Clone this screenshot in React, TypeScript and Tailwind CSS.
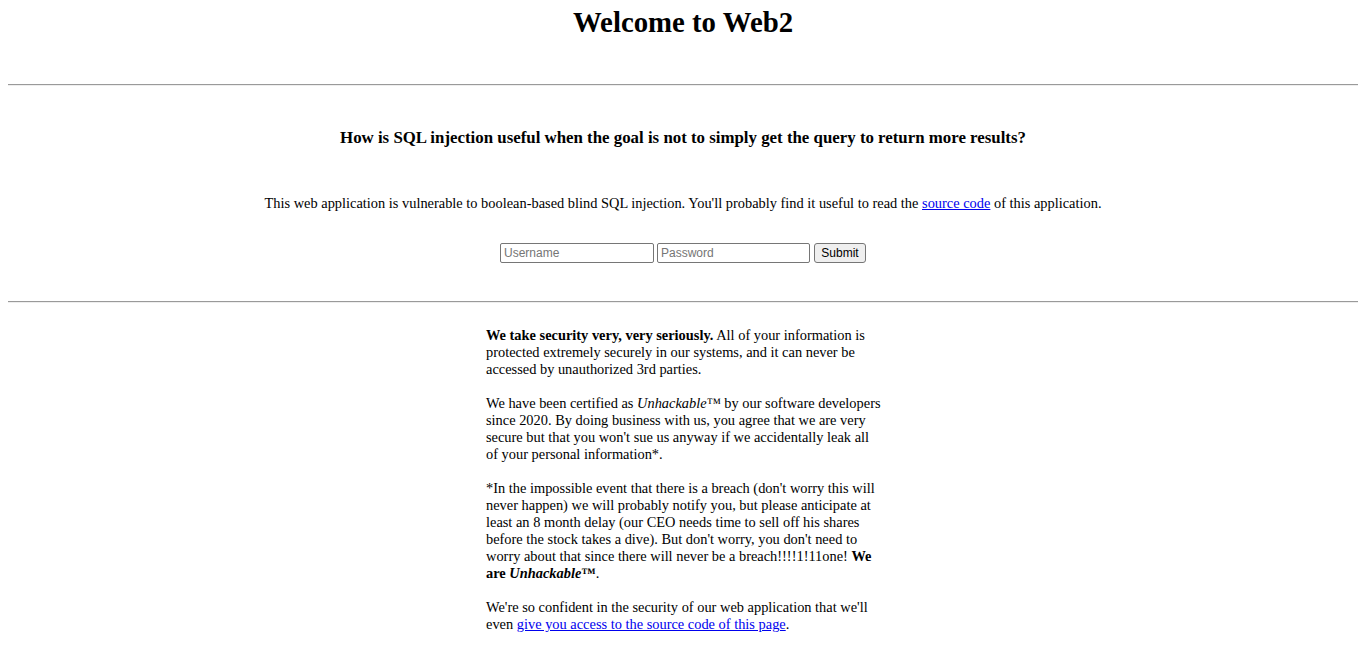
import React from "react";

export default function App() {
  return (
    <div className="w-[1350px] ml-[8px] text-black bg-white" style={{ fontFamily: '"Liberation Serif", "Times New Roman", serif' }}>
      <h1 className="mt-[6px] text-center font-bold text-[28.8px] leading-[33px]">Welcome to Web2</h1>
      <hr className="mt-[45px] h-0 border-0 border-t border-t-[#9a9a9a] border-b border-b-[#eeeeee]" />
      <h3 className="mt-[42px] text-center font-bold text-[16.85px] leading-[19px]">
        How is SQL injection useful when the goal is not to simply get the query to return more results?
      </h3>
      <p className="mt-[48px] text-center text-[14.4px] leading-[17px]">
        This web application is vulnerable to boolean-based blind SQL injection. You'll probably find it useful to read the{" "}
        <a href="#" className="text-[#0000ee] underline">source code</a> of this application.
      </p>
      <form className="mt-[31px] flex justify-center items-center h-[20px]" style={{ fontFamily: '"Liberation Sans", Arial, sans-serif' }}>
        <input
          placeholder="Username"
          className="w-[154px] h-[20px] border border-[#767676] rounded-[2px] px-[3px] text-[12px] placeholder:text-[#757575] outline-none"
        />
        <input
          placeholder="Password"
          type="password"
          className="ml-[3px] w-[153px] h-[20px] border border-[#767676] rounded-[2px] px-[3px] text-[12px] placeholder:text-[#757575] outline-none"
        />
        <button
          type="button"
          className="ml-[4px] w-[52px] h-[20px] border border-[#767676] rounded-[3px] bg-[#efefef] text-[12px] text-black"
        >
          Submit
        </button>
      </form>
      <hr className="mt-[38px] h-0 border-0 border-t border-t-[#9a9a9a] border-b border-b-[#eeeeee]" />
      <div className="mx-auto w-[400px] pl-[3px] mt-[24px] text-[14.4px] leading-[17px]">
        <p>
          <b>We take security very, very seriously.</b> All of your information is protected extremely securely in our systems, and it can never be accessed by unauthorized 3rd parties.
        </p>
        <p className="mt-[17px]">
          We have been certified as <i>Unhackable</i>™ by our software developers since 2020. By doing business with us, you agree that we are very secure but that you won't sue us anyway if we accidentally leak all of your personal information*.
        </p>
        <p className="mt-[17px]">
          *In the impossible event that there is a breach (don't worry this will never happen) we will probably notify you, but please anticipate at least an 8 month delay (our CEO needs time to sell off his shares before the stock takes a dive). But don't worry, you don't need to worry about that since there will never be a breach!!!!1!11one! <b>We are <i>Unhackable</i>™</b>.
        </p>
        <p className="mt-[17px]">
          We're so confident in the security of our web application that we'll even{" "}
          <a href="#" className="text-[#0000ee] underline">give you access to the source code of this page</a>.
        </p>
      </div>
    </div>
  );
}
